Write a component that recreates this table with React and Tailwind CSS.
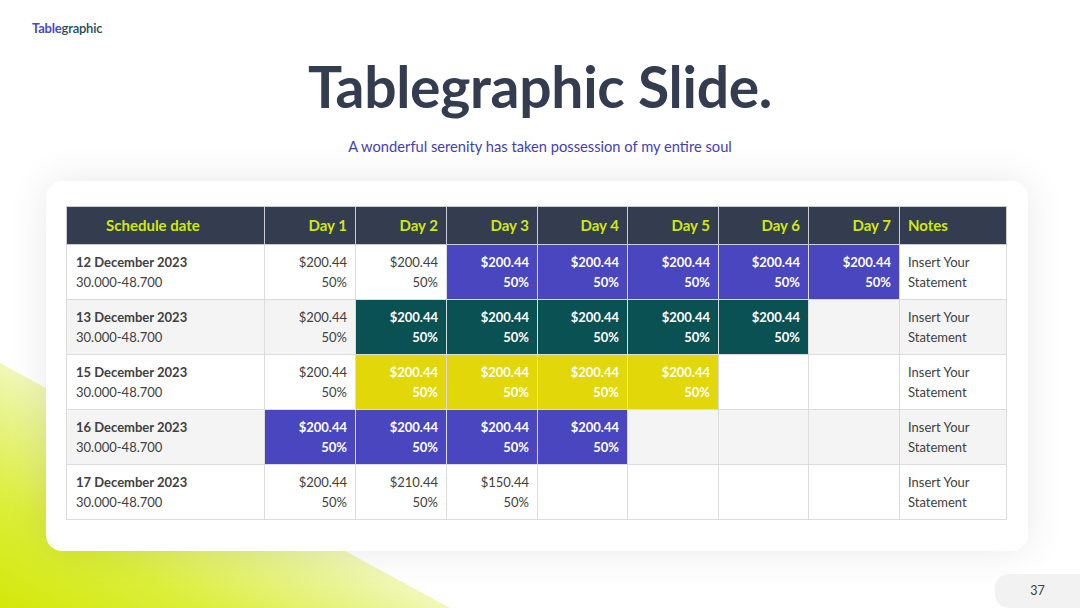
import React from "react";

const P = "p", I = "i", T = "t", Y = "y", E = "e";

const rows = [
  { date: "12 December 2023", bg: "bg-white", cells: [[P, "$200.44"], [P, "$200.44"], [I], [I], [I], [I], [I]] },
  { date: "13 December 2023", bg: "bg-[#f4f4f4]", cells: [[P, "$200.44"], [T], [T], [T], [T], [T], [E]] },
  { date: "15 December 2023", bg: "bg-white", cells: [[P, "$200.44"], [Y], [Y], [Y], [Y], [E], [E]] },
  { date: "16 December 2023", bg: "bg-[#f4f4f4]", cells: [[I], [I], [I], [I], [E], [E], [E]] },
  { date: "17 December 2023", bg: "bg-white", cells: [[P, "$200.44"], [P, "$210.44"], [P, "$150.44"], [E], [E], [E], [E]] },
];

const colorCls = {
  i: "bg-[#4946c0] text-white font-bold",
  t: "bg-[#0a5154] text-white font-bold",
  y: "bg-[#e2d708] text-white font-bold",
  p: "text-[#404040]",
  e: "",
};

const widths = ["w-[198px]", "w-[91px]", "w-[91px]", "w-[91px]", "w-[90px]", "w-[91px]", "w-[90px]", "w-[91px]", "w-[107px]"];

export default function App() {
  const font = { fontFamily: "Lato, 'Open Sans', sans-serif" };
  return (
    <div className="relative w-[1080px] h-[608px] overflow-hidden bg-white" style={font}>
      <div
        className="absolute left-0 bottom-0 w-[450px] h-[245px]"
        style={{
          clipPath: "polygon(0 0, 100% 100%, 0 100%)",
          background: "linear-gradient(to top right, #d3e80a 0%, #dcee3a 22%, #e9f494 42%, rgba(245,250,205,0.7) 58%, rgba(255,255,255,0) 74%)",
        }}
      />
      <div className="relative flex flex-col">
        <div className="pl-[32px] pt-[20px] text-[13px] leading-[16px] tracking-[-0.2px]">
          <span className="font-bold text-[#4a47c0]">Table</span>
          <span className="font-semibold text-[#1d4b52]">graphic</span>
        </div>
        <h1 className="mt-[22px] text-center text-[57px] leading-[56px] font-bold text-[#333d4f] tracking-[-0.3px]">
          Tablegraphic Slide.
        </h1>
        <p className="mt-[22px] text-center text-[14.7px] leading-[20px] text-[#4541b0]">
          A wonderful serenity has taken possession of my entire soul
        </p>
        <div className="mt-[25px] ml-[46px] w-[982px] h-[370px] rounded-[16px] bg-white shadow-[0_0_40px_rgba(0,0,0,0.09)] pt-[25px] pl-[20px]">
          <table className="border-collapse table-fixed w-[940px] text-[13px]">
            <thead>
              <tr className="bg-[#333d4f] text-[#d2e612] font-bold text-[15px] h-[38px]">
                <th className={`${widths[0]} border border-[#c9ccd2] text-left pl-[39px] font-bold`}>Schedule date</th>
                {[1, 2, 3, 4, 5, 6, 7].map((d, i) => (
                  <th key={d} className={`${widths[i + 1]} border border-[#c9ccd2] text-right pr-[8px] font-bold`}>Day {d}</th>
                ))}
                <th className={`${widths[8]} border border-[#c9ccd2] text-left pl-[8px] font-bold`}>Notes</th>
              </tr>
            </thead>
            <tbody>
              {rows.map((r) => (
                <tr key={r.date} className={`${r.bg} h-[55px]`}>
                  <td className="border border-[#dcdcdc] pl-[9px] leading-[20px] text-[#404040]">
                    <div className="font-bold">{r.date}</div>
                    <div>30.000-48.700</div>
                  </td>
                  {r.cells.map((c, i) => (
                    <td key={i} className={`border border-[#dcdcdc] text-right pr-[8px] leading-[20px] ${colorCls[c[0]]}`}>
                      {c[0] !== E && (
                        <>
                          <div>{c[1] || "$200.44"}</div>
                          <div>50%</div>
                        </>
                      )}
                    </td>
                  ))}
                  <td className="border border-[#dcdcdc] pl-[8px] leading-[20px] text-[#404040]">
                    <div>Insert Your</div>
                    <div>Statement</div>
                  </td>
                </tr>
              ))}
            </tbody>
          </table>
        </div>
      </div>
      <div className="absolute right-0 bottom-0 w-[85px] h-[34px] rounded-tl-[14px] rounded-bl-[14px] bg-[#f2f2f2] flex items-center justify-center text-[12.5px] text-[#404040]">
        37
      </div>
    </div>
  );
}
